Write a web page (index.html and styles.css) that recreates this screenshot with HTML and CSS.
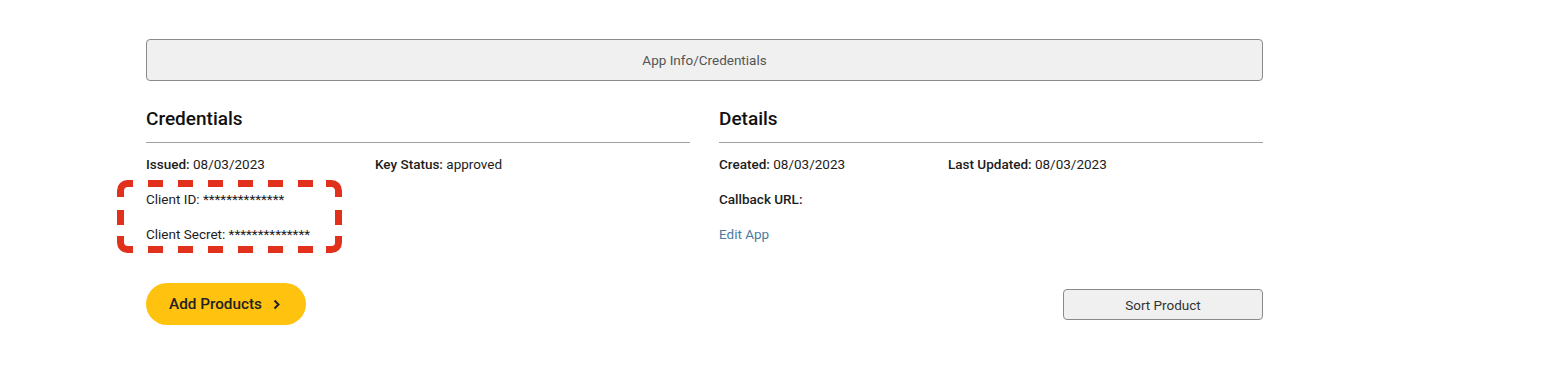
FILE: index.html
```html
<!DOCTYPE html>
<html lang="en">
<head>
    <meta charset="UTF-8">
    <meta name="viewport" content="width=device-width, initial-scale=1.0">
    <title>App Info/Credentials</title>
    <link rel="stylesheet" href="styles.css">
</head>
<body>
    <div class="page">
        <div class="tab-bar">App Info/Credentials</div>

        <div class="columns">
            <div class="panel">
                <h2 class="panel-title">Credentials</h2>
                <div class="row split">
                    <span><b>Issued:</b> 08/03/2023</span>
                    <span><b>Key Status:</b> approved</span>
                </div>
                <div class="secret-group">
                    <div class="row">Client ID: **************</div>
                    <div class="row">Client Secret: **************</div>
                    <svg class="highlight" width="225" height="73" viewBox="0 0 225 73">
                        <g fill="none" stroke="#e1301b" stroke-width="7">
                            <path d="M16 3.5H10.5A7 7 0 0 0 3.5 10.5V17"/>
                            <path d="M209 3.5H214.5A7 7 0 0 1 221.5 10.5V17"/>
                            <path d="M3.5 56V62.5A7 7 0 0 0 10.5 69.5H16"/>
                            <path d="M221.5 56V62.5A7 7 0 0 1 214.5 69.5H209"/>
                            <path d="M31 3.5H196" stroke-dasharray="15 15"/>
                            <path d="M31 69.5H196" stroke-dasharray="15 15"/>
                            <path d="M3.5 30V45"/>
                            <path d="M221.5 30V45"/>
                        </g>
                    </svg>
                </div>
            </div>

            <div class="panel">
                <h2 class="panel-title">Details</h2>
                <div class="row split">
                    <span><b>Created:</b> 08/03/2023</span>
                    <span><b>Last Updated:</b> 08/03/2023</span>
                </div>
                <div class="row"><b>Callback URL:</b></div>
                <div class="row"><a class="link" href="#">Edit App</a></div>
            </div>
        </div>

        <div class="actions">
            <button class="add-button">
                Add Products
                <svg width="8" height="11" viewBox="0 0 8 11"><path d="M1.5 1.5L5.5 5.5L1.5 9.5" fill="none" stroke="#222" stroke-width="2"/></svg>
            </button>
            <button class="sort-button">Sort Product</button>
        </div>
    </div>
</body>
</html>
```

FILE: styles.css
```css
body {
    font-family: Roboto, "Liberation Sans", sans-serif;
    margin: 0;
    color: #1c1c1c;
    background: #fff;
}
.page {
    width: 1117px;
    margin-left: 146px;
    padding-top: 39px;
}
.tab-bar {
    height: 42px;
    box-sizing: border-box;
    border: 1px solid #8a8a8a;
    border-radius: 4px;
    background: #f0f0f0;
    color: #555;
    font-size: 13.5px;
    display: flex;
    align-items: center;
    justify-content: center;
}
.columns {
    display: grid;
    grid-template-columns: 1fr 1fr;
    gap: 29px;
    margin-top: 26px;
}
.panel-title {
    margin: 0 0 12px;
    font-size: 19px;
    font-weight: 500;
    line-height: 24px;
    padding-bottom: 11px;
    border-bottom: 1px solid #a0a0a0;
    color: #111;
}
.row {
    font-size: 13.5px;
    line-height: 18px;
    margin-bottom: 17px;
}
.row b {
    font-weight: 500;
}
.split {
    display: grid;
    grid-template-columns: 229px auto;
}
.secret-group {
    position: relative;
}
.highlight {
    position: absolute;
    left: -29px;
    top: -10px;
}
.link {
    color: #4b7ba3;
    text-decoration: none;
}
.actions {
    display: flex;
    justify-content: space-between;
    align-items: center;
    margin-top: 23px;
}
.add-button {
    font-family: inherit;
    background: #ffc20e;
    color: #222;
    border: none;
    border-radius: 21px;
    height: 42px;
    width: 160px;
    padding: 0 0 0 23px;
    font-size: 15.3px;
    font-weight: 500;
    display: flex;
    align-items: center;
    gap: 11px;
    cursor: pointer;
}
.sort-button {
    font-family: inherit;
    width: 200px;
    height: 31px;
    padding-top: 2px;
    background: #f0f0f0;
    border: 1px solid #8a8a8a;
    border-radius: 4px;
    font-size: 13.5px;
    color: #333;
    cursor: pointer;
}
```
